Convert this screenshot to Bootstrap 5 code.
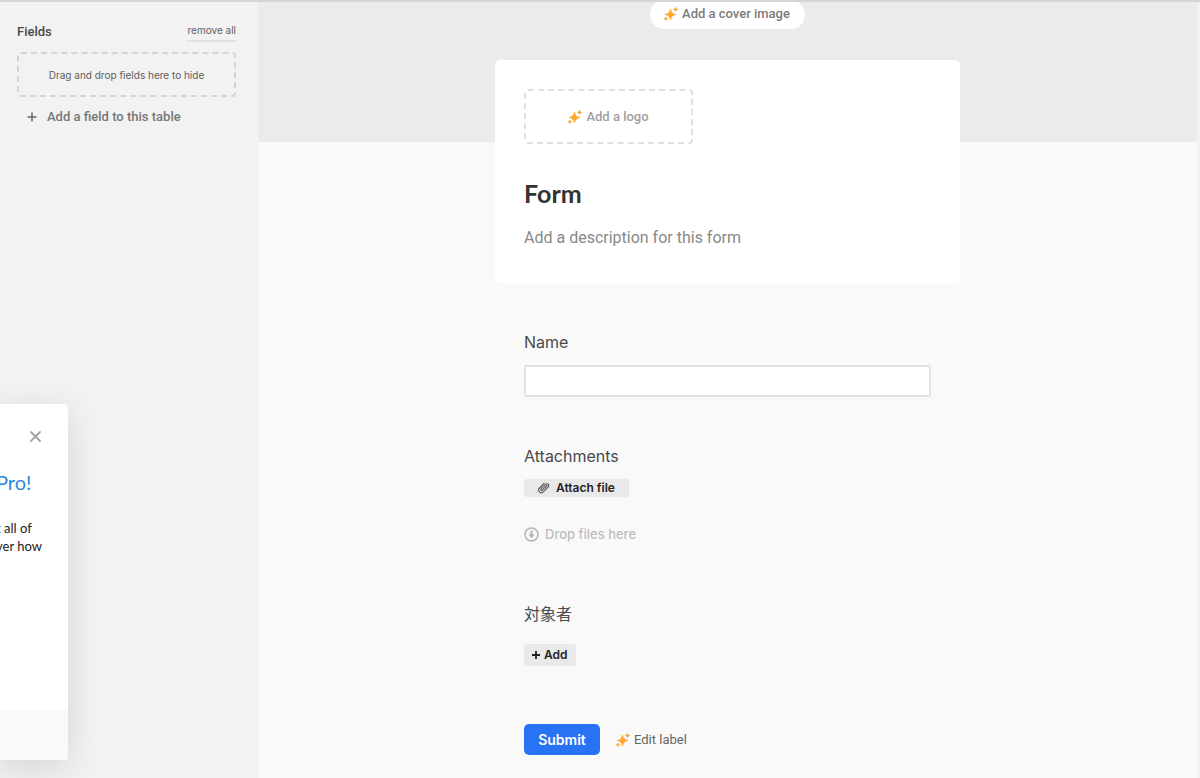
<!DOCTYPE html>
<html lang="en">
<head>
<meta charset="utf-8">
<meta name="viewport" content="width=device-width, initial-scale=1">
<title>Form</title>
<link href="https://cdn.jsdelivr.net/npm/bootstrap@5.3.0/dist/css/bootstrap.min.css" rel="stylesheet">
<style>
  body { font-family: Roboto, "Noto Sans CJK JP", sans-serif; font-size: 13px; line-height: 20px; color: #4a4a4a; background: #f9f9f9; overflow-x: hidden; }
  button { font-family: inherit; }
  .topline { height: 2px; background: #d5d5d5; z-index: 5; }
  .fields-pane { width: 258px; background: #f2f2f2; padding: 20px 22px 0 17px; }
  .fields-title { font-weight: 500; line-height: 24px; }
  .plain { border: 0; background: none; padding: 0; }
  .remove-all { font-family: Inter, sans-serif; font-size: 10px; line-height: 20px; color: #606060; border-bottom: 2px solid #e0e0e0; }
  .dashed { border: 2px dashed #d5d5d5; border-radius: 4px; }
  .hide-zone { height: 45px; margin-top: 8px; font-family: Inter, sans-serif; font-size: 10px; color: #606060; }
  .add-field { gap: 10px; margin: 10px 0 0 10px; color: #777; font-weight: 500; }
  .stage { min-height: 100vh; border-right: 3px solid #f2f2f2; }
  .cover { height: 142px; background: #ebebeb; }
  .cover-btn { height: 29px; padding: 0 15px 2px 14px; border-radius: 15px; background: #fff; font-weight: 500; color: #7b7b7b; }
  .sheet { width: 100%; max-width: 465px; margin-top: -82px; }
  .head-card { background: #fff; border-radius: 5px; padding: 29px 29px 33px; }
  .logo-zone { width: 169px; height: 55px; background: none; border-color: #e0e0e0; color: #a0a0a0; font-weight: 500; }
  .form-name { font-family: Lato, sans-serif; font-size: 25px; line-height: 32px; font-weight: 700; color: #333; margin: 33px 0 0; }
  .form-desc { font-size: 16px; line-height: 24px; color: #888; margin: 17px 0 0; }
  .fill-area { padding: 47px 29px 0; }
  .field-label { display: block; font-family: Inter, "Noto Sans CJK JP", sans-serif; font-size: 16px; line-height: 24px; color: #4a4a4a; }
  .name-box { height: 32px; margin-top: 11px; border: 2px solid #e3e3e3; border-radius: 2px; background: #fff; }
  .attach-group { margin-top: 47px; }
  .attach-btn { height: 18px; padding: 0 14px; gap: 6px; margin-top: 11px; }
  .grey-btn { background: #e9e9e9; color: #222; font-family: Inter, sans-serif; font-size: 12px; font-weight: 600; border: 0; border-radius: 3px; }
  .drop-hint { font-family: Inter, sans-serif; color: #bdbdbd; font-weight: 500; gap: 6px; margin-top: 27px; }
  .people-group { margin-top: 58px; }
  .add-btn { height: 22px; padding: 0 8px; gap: 4px; margin-top: 18px; }
  .submit-row { margin-top: 58px; gap: 16px; }
  .submit-btn { height: 31px; width: 76px; padding: 0; border: 0; border-radius: 5px; font-family: Inter, sans-serif; font-size: 14px; line-height: 31px; font-weight: 600; background: #2872f4; }
  .edit-btn { color: #666; }
  .promo { left: -4px; top: 404px; width: 72px; height: 356px; border-radius: 0 4px 4px 0; background: #fff; box-shadow: 0 8px 36px rgba(0,0,0,.12); z-index: 10; font-family: Lato, sans-serif; color: #222; }
  .promo-close { margin: 25px 25px 0 0; line-height: 1; }
  .promo-title { font-size: 20px; line-height: 28px; font-weight: 400; color: #2a87dc; margin: 24px 0 0; }
  .promo-text { line-height: 18px; margin: 23px 0 0; white-space: nowrap; }
  .promo-foot { height: 50px; background: #f9f9f9; border-radius: 0 0 4px 0; }
</style>
</head>
<body>
<svg class="d-none" aria-hidden="true">
  <symbol id="sparkle" viewBox="0 0 14 14">
    <path fill="#fca92b" d="M6.500 2.200C7.300 5.500 8.300 6.700 11.900 7.500 8.300 8.300 7.300 9.500 6.500 12.800 5.700 9.500 4.700 8.300 1.100 7.500 4.700 6.700 5.700 5.500 6.500 2.200ZM11.500 .3C11.800 1.700 12.200 2.100 13.600 2.400 12.200 2.700 11.800 3.100 11.500 4.500 11.200 3.100 10.800 2.700 9.400 2.400 10.800 2.100 11.200 1.700 11.500 .3ZM1.900 10C2.100 11.200 2.500 11.600 3.700 11.800 2.500 12 2.100 12.400 1.900 13.600 1.700 12.400 1.300 12 .1 11.800 1.300 11.600 1.700 11.200 1.900 10Z" stroke="#fca92b" stroke-width=".8"/>
  </symbol>
</svg>

<div class="topline position-absolute top-0 start-0 end-0"></div>

<div class="d-flex min-vh-100">
  <aside class="fields-pane flex-shrink-0">
    <div class="d-flex justify-content-between align-items-start">
      <span class="fields-title">Fields</span>
      <button type="button" class="plain remove-all">remove all</button>
    </div>
    <div class="dashed hide-zone d-flex align-items-center justify-content-center">Drag and drop fields here to hide</div>
    <button type="button" class="plain add-field d-flex align-items-center">
      <svg width="10" height="10" viewBox="0 0 10 10" stroke="#666" stroke-width="1.500" aria-hidden="true"><path d="M5 .5v9M.5 5h9"/></svg>
      Add a field to this table
    </button>
  </aside>

  <main class="stage flex-grow-1">
    <div class="cover d-flex justify-content-center align-items-start">
      <button type="button" class="plain cover-btn d-flex align-items-center gap-1">
        <svg width="14" height="14" aria-hidden="true"><use href="#sparkle"/></svg>Add a cover image
      </button>
    </div>
    <div class="sheet mx-auto">
      <section class="head-card">
        <button type="button" class="dashed logo-zone d-flex align-items-center justify-content-center gap-1 p-0">
          <svg width="14" height="14" aria-hidden="true"><use href="#sparkle"/></svg>Add a logo
        </button>
        <h1 class="form-name">Form</h1>
        <p class="form-desc">Add a description for this form</p>
      </section>

      <form class="fill-area">
        <div>
          <label class="field-label" for="name">Name</label>
          <input class="form-control name-box" type="text" id="name">
        </div>
        <div class="attach-group">
          <span class="field-label">Attachments</span>
          <button type="button" class="grey-btn attach-btn d-flex align-items-center">
            <svg width="12" height="12" viewBox="0 0 12 12" fill="none" stroke="#555" stroke-width="1.100" stroke-linecap="round" aria-hidden="true"><path d="M9 3.500 4.300 8.200a.9.9 0 0 1-1.300-1.300L7.600 2.300a1.800 1.800 0 0 1 2.700 2.600L5.300 9.900A2.700 2.700 0 0 1 1.500 6L6.100 1.400"/></svg>
            Attach file
          </button>
          <div class="drop-hint d-flex align-items-center">
            <svg width="15" height="15" viewBox="0 0 15 15" fill="none" stroke="#b5b5b5" aria-hidden="true"><circle cx="7.500" cy="7.500" r="6.500" stroke-width="1.500"/><path d="M7.500 3.500v4.500" stroke-width="2"/><path d="M4.300 7.500h6.400L7.500 11.200Z" fill="#b5b5b5" stroke="none"/></svg>
            Drop files here
          </div>
        </div>
        <div class="people-group">
          <span class="field-label" lang="ja">対象者</span>
          <button type="button" class="grey-btn add-btn d-flex align-items-center">
            <svg width="8" height="8" viewBox="0 0 8 8" stroke="#222" stroke-width="1.800" aria-hidden="true"><path d="M4 0v8M0 4h8"/></svg>
            Add
          </button>
        </div>
        <div class="submit-row d-flex align-items-center">
          <button type="submit" class="btn btn-primary submit-btn">Submit</button>
          <button type="button" class="plain edit-btn d-flex align-items-center gap-1">
            <svg width="14" height="14" aria-hidden="true"><use href="#sparkle"/></svg>Edit label
          </button>
        </div>
      </form>
    </div>
  </main>
</div>

<aside class="promo position-absolute d-flex flex-column">
  <button type="button" class="plain promo-close align-self-end" aria-label="Close">
    <svg class="d-block" width="15" height="15" viewBox="0 0 15 15" stroke="#9fa3a8" stroke-width="1.800" stroke-linecap="round" aria-hidden="true"><path d="M3 3l9 9M12 3l-9 9"/></svg>
  </button>
  <h2 class="promo-title">Pro!</h2>
  <p class="promo-text">t all of<br>ver how</p>
  <div class="promo-foot mt-auto"></div>
</aside>
<script src="https://cdn.jsdelivr.net/npm/bootstrap@5.3.0/dist/js/bootstrap.bundle.min.js"></script>
</body>
</html>
